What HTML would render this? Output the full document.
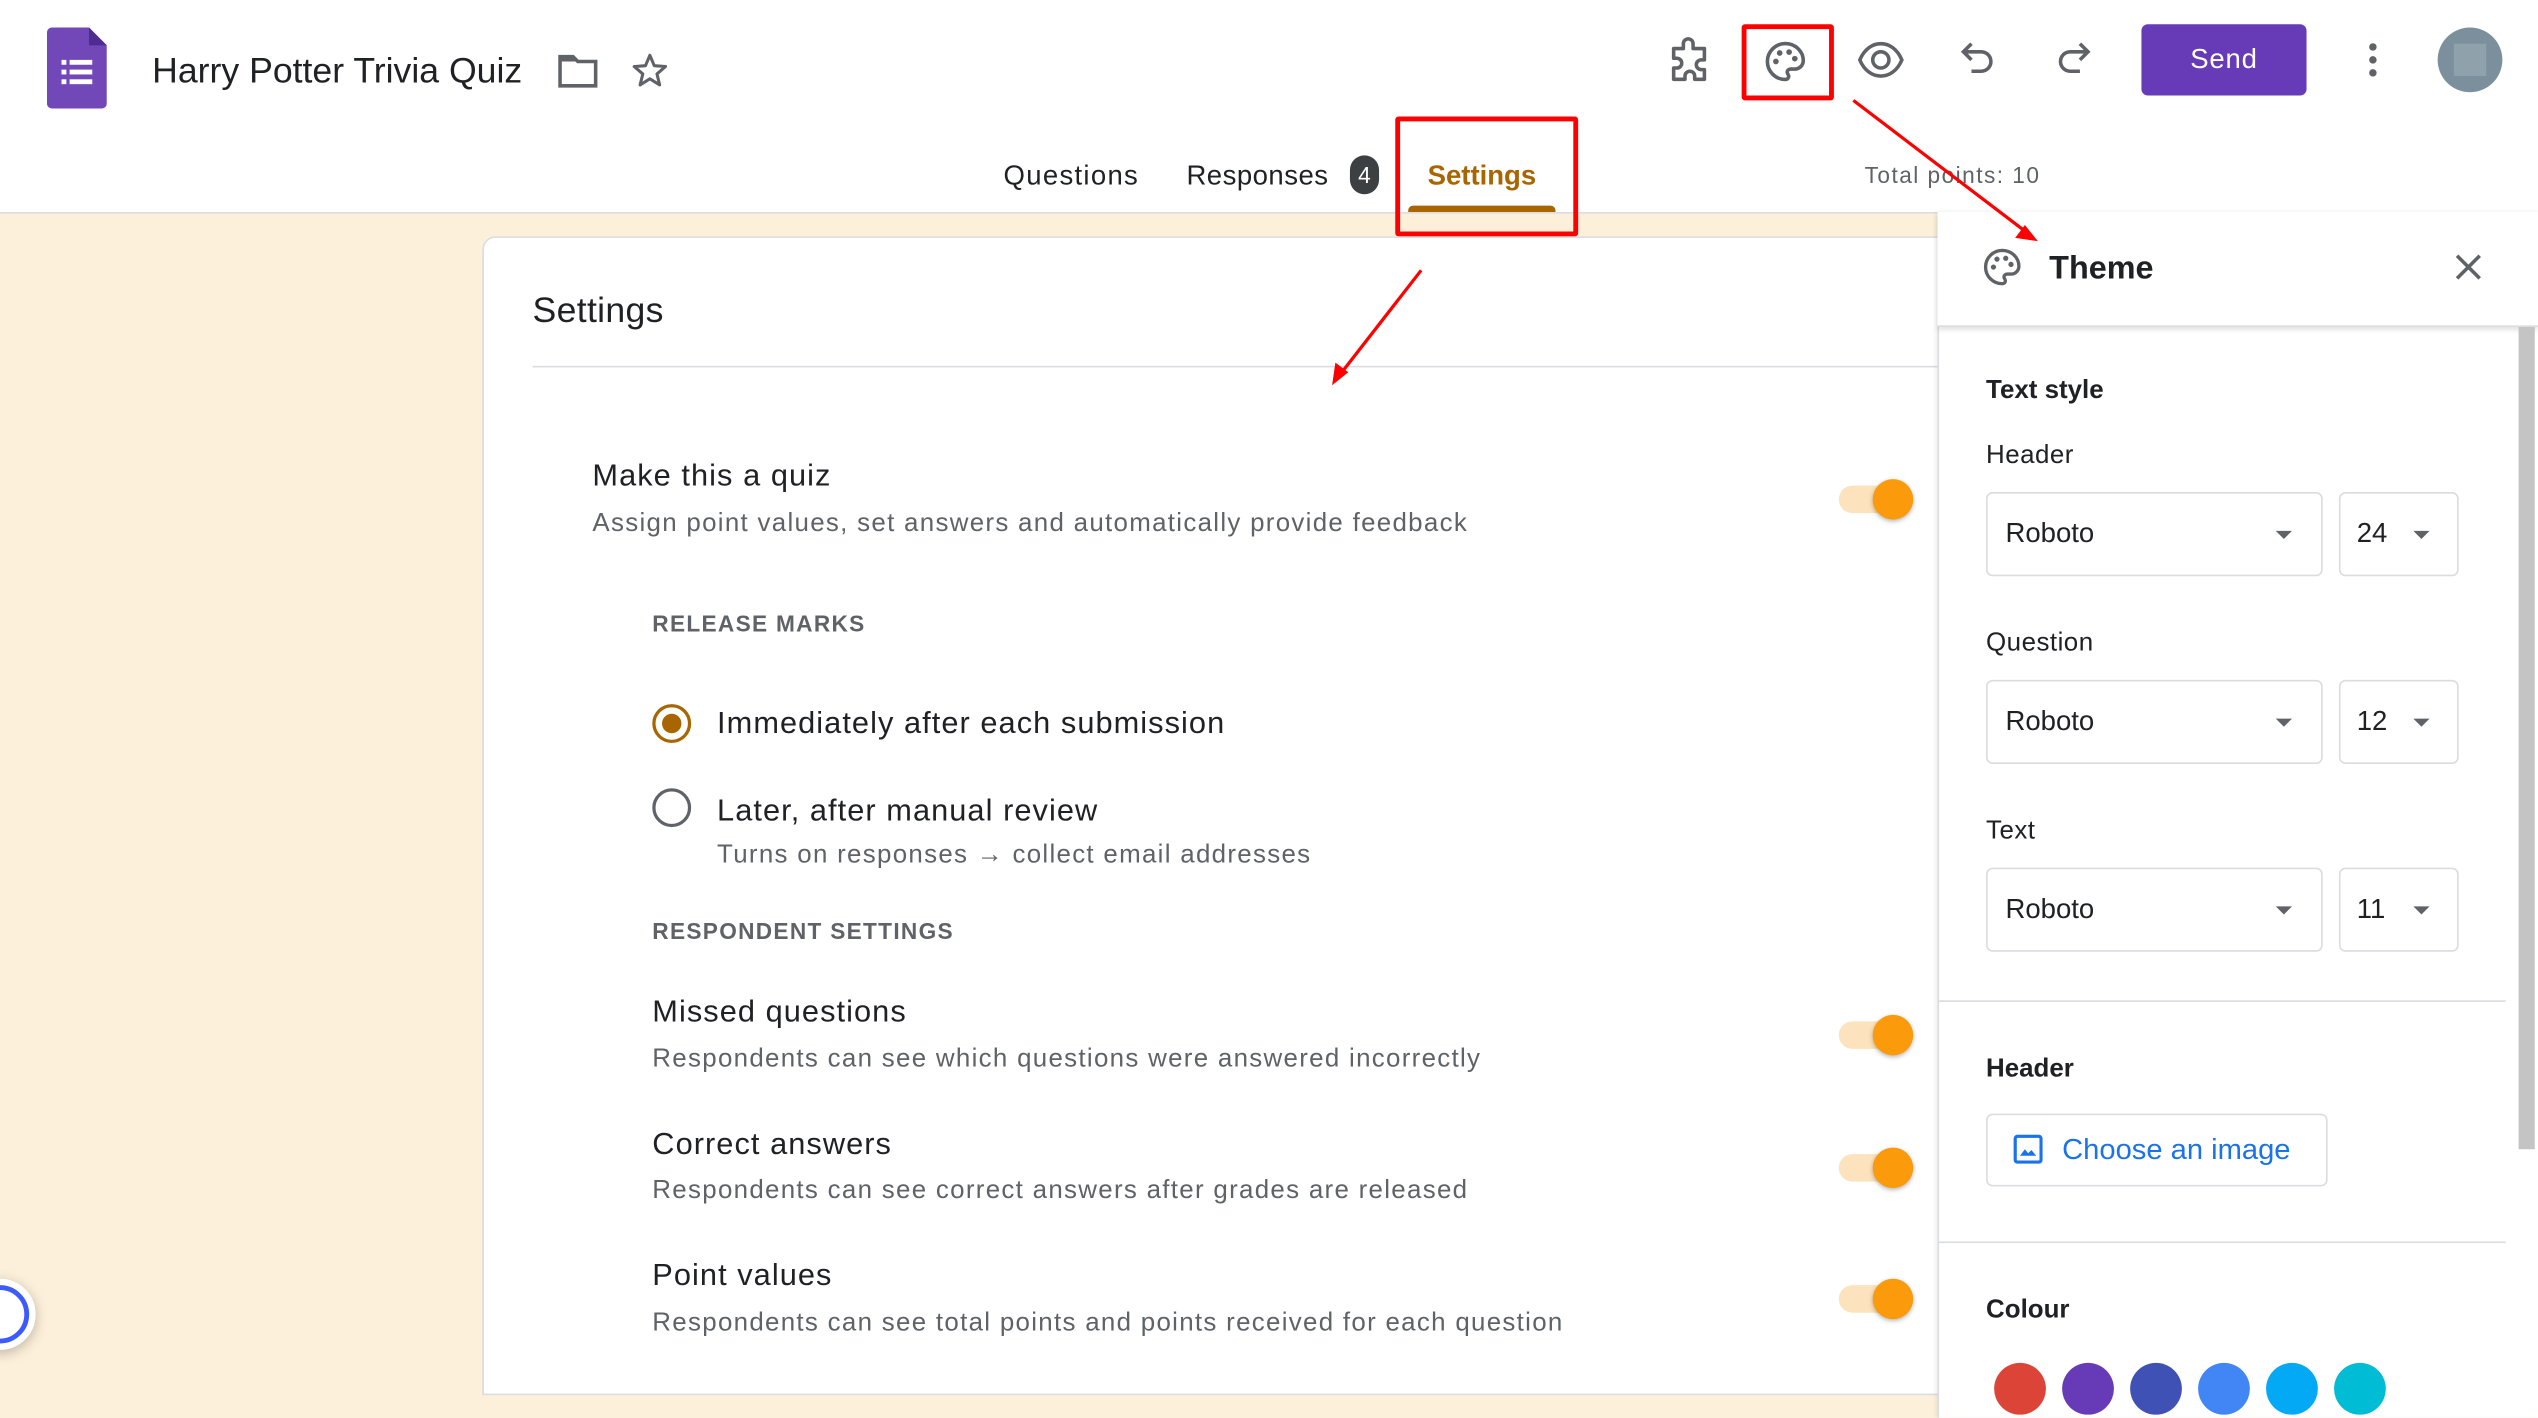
<!DOCTYPE html>
<html><head><meta charset="utf-8">
<style>
html,body{margin:0;padding:0;width:2538px;height:1418px;overflow:hidden;background:#fdf0da;}
#s{position:absolute;left:0;top:0;width:1568px;height:876px;transform:scale(1.61862);transform-origin:0 0;font-family:"Liberation Sans",Arial,sans-serif;color:#202124;background:#fdf0da;overflow:hidden}
.a{position:absolute;white-space:nowrap}
.t{position:absolute;white-space:nowrap;line-height:1}
.d{letter-spacing:0.8px}
.h{letter-spacing:0.65px}
.tog{position:absolute;width:34px;height:17px;border-radius:9px;background:#fde3bd}
.tog:after{content:"";position:absolute;right:-12px;top:-4px;width:25px;height:25px;border-radius:50%;background:#fb9a0a;box-shadow:0 1px 3px rgba(0,0,0,.3)}
.sel{position:absolute;border:1px solid #dadce0;border-radius:4px;background:#fff}
.sel span{position:absolute;top:50%;transform:translateY(-50%);font-size:17px;color:#202124}
.sel i{position:absolute;top:50%;margin-top:-2px;border-left:5px solid transparent;border-right:5px solid transparent;border-top:5px solid #5f6368}
.dot{position:absolute;width:32px;height:32px;border-radius:50%;top:842px}
</style></head><body><div id="s">
<div class="a" style="left:0;top:0;width:1568px;height:131px;background:#fff;border-bottom:1px solid #dadce0"></div>
<svg class="a" style="left:29px;top:17px" width="37" height="50" viewBox="0 0 37 50"><path d="M3 0H26L37 11V47a3 3 0 0 1-3 3H3a3 3 0 0 1-3-3V3a3 3 0 0 1 3-3z" fill="#7248b9"/><path d="M26 0V11H37z" fill="#4e2c91"/><g fill="#fff"><rect x="9" y="20" width="3" height="3"/><rect x="14" y="20" width="14" height="3"/><rect x="9" y="26" width="3" height="3"/><rect x="14" y="26" width="14" height="3"/><rect x="9" y="32" width="3" height="3"/><rect x="14" y="32" width="14" height="3"/></g></svg>
<div class="t" style="left:94px;top:33px;font-size:22px">Harry Potter Trivia Quiz</div>
<svg class="a" style="left:344px;top:32px" width="27" height="24" viewBox="0 0 27 24"><path d="M2 3h8l3 3h11v15H2z" fill="none" stroke="#5f6368" stroke-width="2.2"/><path d="M2 3h8l3 3H2z" fill="#5f6368"/></svg>
<svg class="a" style="left:389px;top:31px" width="25" height="25" viewBox="0 0 24 24"><path d="M12 3l2.6 6.2 6.7.5-5.1 4.4 1.6 6.5L12 17l-5.8 3.6 1.6-6.5L2.7 9.7l6.7-.5z" fill="none" stroke="#5f6368" stroke-width="1.8" stroke-linejoin="round"/></svg>
<svg class="a" style="left:1030px;top:22px" width="28" height="30" viewBox="0 0 28 30"><path d="M4 8h6V5a3 3 0 0 1 6 0v3h7v7h-2a3 3 0 0 0 0 6h2v6h-6v-2a3 3 0 0 0-6 0v2H4v-7h2a3 3 0 0 0 0-6H4z" fill="none" stroke="#5f6368" stroke-width="2.2" stroke-linejoin="round"/></svg>
<div class="a" style="left:1076px;top:15px;width:51px;height:41px;border:3px solid #ff0000;border-radius:2px"></div>
<svg class="a" style="left:1089px;top:24px" width="28" height="28" viewBox="0 0 24 24"><path d="M12 2.5a9.5 9.5 0 0 0 0 19c1.2 0 1.8-.8 1.8-1.6 0-1-.8-1.3-.8-2.2 0-1 .8-1.7 1.8-1.7h2.2a4.5 4.5 0 0 0 4.5-4.5c0-5-4.3-9-9.5-9z" fill="none" stroke="#5f6368" stroke-width="1.9"/><circle cx="7" cy="12" r="1.5" fill="#5f6368"/><circle cx="9" cy="7.5" r="1.5" fill="#5f6368"/><circle cx="14" cy="7" r="1.5" fill="#5f6368"/><circle cx="17" cy="10.5" r="1.5" fill="#5f6368"/></svg>
<svg class="a" style="left:1147px;top:24px" width="30" height="26" viewBox="0 0 30 26"><path d="M2 13C5 6 10 3 15 3s10 3 13 10c-3 7-8 10-13 10S5 20 2 13z" fill="none" stroke="#5f6368" stroke-width="2.2"/><circle cx="15" cy="13" r="5" fill="none" stroke="#5f6368" stroke-width="2.2"/></svg>
<svg class="a" style="left:1210px;top:24px" width="24" height="26" viewBox="0 0 24 26"><path d="M8 3L3 8l5 5" fill="none" stroke="#5f6368" stroke-width="2.2"/><path d="M3 8h11a6 6 0 0 1 0 12H8" fill="none" stroke="#5f6368" stroke-width="2.2"/></svg>
<svg class="a" style="left:1269px;top:24px" width="24" height="26" viewBox="0 0 24 26"><path d="M16 3l5 5-5 5" fill="none" stroke="#5f6368" stroke-width="2.2"/><path d="M21 8H10a6 6 0 0 0 0 12h6" fill="none" stroke="#5f6368" stroke-width="2.2"/></svg>
<div class="a" style="left:1323px;top:15px;width:102px;height:44px;background:#673ab7;border-radius:4px;color:#fff;font-size:17px;line-height:44px;text-align:center;letter-spacing:0.5px">Send</div>
<svg class="a" style="left:1462px;top:26px" width="8" height="22" viewBox="0 0 8 22"><circle cx="4" cy="3" r="2.3" fill="#5f6368"/><circle cx="4" cy="11" r="2.3" fill="#5f6368"/><circle cx="4" cy="19" r="2.3" fill="#5f6368"/></svg>
<div class="a" style="left:1506px;top:17px;width:40px;height:40px;border-radius:50%;background:#7b909c"><div style="margin:10px;width:20px;height:20px;background:#8fa1ab"></div></div>
<div class="t" style="left:620px;top:100px;font-size:17px;letter-spacing:0.8px">Questions</div>
<div class="t" style="left:733px;top:100px;font-size:17px;letter-spacing:0.3px">Responses</div>
<div class="a" style="left:834px;top:96px;width:18px;height:24px;border-radius:9px;background:#3c4043;color:#fff;font-size:14px;line-height:24px;text-align:center">4</div>
<div class="t" style="left:882px;top:100px;font-size:17px;color:#a86500;font-weight:bold">Settings</div>
<div class="a" style="left:870px;top:127px;width:91px;height:4px;background:#a86500;border-radius:3px 3px 0 0"></div>
<div class="a" style="left:862px;top:72px;width:107px;height:68px;border:3px solid #ff0000;border-radius:2px"></div>
<div class="t" style="left:1152px;top:101px;font-size:14px;color:#5f6368;letter-spacing:0.9px">Total points: 10</div>
<div class="a" style="left:298px;top:146px;width:920px;height:714px;background:#fff;border:1px solid #dadce0;border-radius:8px 8px 0 0"></div>
<div class="t" style="left:329px;top:181px;font-size:22px;letter-spacing:0.2px">Settings</div>
<div class="a" style="left:329px;top:226px;width:880px;height:1px;background:#dadce0"></div>
<div class="t h" style="left:366px;top:285px;font-size:19px">Make this a quiz</div>
<div class="t d" style="left:366px;top:316px;font-size:16px;color:#5f6368">Assign point values, set answers and automatically provide feedback</div>
<div class="tog" style="left:1136px;top:300px"></div>
<div class="t" style="left:403px;top:378px;font-size:14px;color:#5f6368;letter-spacing:0.8px;font-weight:bold">RELEASE MARKS</div>
<div class="a" style="left:403px;top:435px;width:20px;height:20px;border:2.5px solid #a86500;border-radius:50%"><div style="margin:4px;width:12px;height:12px;border-radius:50%;background:#a86500"></div></div>
<div class="t h" style="left:443px;top:438px;font-size:19px">Immediately after each submission</div>
<div class="a" style="left:403px;top:487px;width:20px;height:20px;border:2.5px solid #5f6368;border-radius:50%"></div>
<div class="t h" style="left:443px;top:492px;font-size:19px">Later, after manual review</div>
<div class="t d" style="left:443px;top:521px;font-size:16px;color:#5f6368">Turns on responses → collect email addresses</div>
<div class="t" style="left:403px;top:568px;font-size:14px;color:#5f6368;letter-spacing:0.8px;font-weight:bold">RESPONDENT SETTINGS</div>
<div class="t h" style="left:403px;top:616px;font-size:19px">Missed questions</div>
<div class="t d" style="left:403px;top:647px;font-size:16px;color:#5f6368">Respondents can see which questions were answered incorrectly</div>
<div class="tog" style="left:1136px;top:631px"></div>
<div class="t h" style="left:403px;top:698px;font-size:19px">Correct answers</div>
<div class="t d" style="left:403px;top:728px;font-size:16px;color:#5f6368">Respondents can see correct answers after grades are released</div>
<div class="tog" style="left:1136px;top:713px"></div>
<div class="t h" style="left:403px;top:779px;font-size:19px">Point values</div>
<div class="t d" style="left:403px;top:810px;font-size:16px;color:#5f6368">Respondents can see total points and points received for each question</div>
<div class="tog" style="left:1136px;top:794px"></div>
<div class="a" style="left:-22px;top:790px;width:36px;height:36px;border-radius:50%;background:#fff;border:4px solid #fff;box-shadow:0 2px 8px rgba(0,0,0,.25)"><div style="width:30px;height:30px;border:3px solid #3d5afe;border-radius:50%"></div></div>
<div class="a" style="left:1197px;top:131px;width:371px;height:745px;background:#fff;border-left:1px solid #dadce0;box-shadow:-1px 0 3px rgba(0,0,0,.08)"></div>
<div class="a" style="left:1197px;top:131px;width:371px;height:70px;border-bottom:1px solid #dadce0;box-shadow:0 2px 3px rgba(0,0,0,.12);background:#fff"></div>
<svg class="a" style="left:1224px;top:152px" width="26" height="26" viewBox="0 0 24 24"><path d="M12 2.5a9.5 9.5 0 0 0 0 19c1.2 0 1.8-.8 1.8-1.6 0-1-.8-1.3-.8-2.2 0-1 .8-1.7 1.8-1.7h2.2a4.5 4.5 0 0 0 4.5-4.5c0-5-4.3-9-9.5-9z" fill="none" stroke="#5f6368" stroke-width="1.9"/><circle cx="7" cy="12" r="1.5" fill="#5f6368"/><circle cx="9" cy="7.5" r="1.5" fill="#5f6368"/><circle cx="14" cy="7" r="1.5" fill="#5f6368"/><circle cx="17" cy="10.5" r="1.5" fill="#5f6368"/></svg>
<div class="t" style="left:1266px;top:156px;font-size:20px;font-weight:bold">Theme</div>
<svg class="a" style="left:1516px;top:156px" width="18" height="18" viewBox="0 0 18 18"><path d="M2 2l14 14M16 2L2 16" stroke="#5f6368" stroke-width="2.2"/></svg>
<div class="a" style="left:1556px;top:202px;width:10px;height:508px;background:#c4c4c4"></div>
<div class="t" style="left:1227px;top:234px;font-size:16px;font-weight:bold">Text style</div>
<div class="t" style="left:1227px;top:274px;font-size:16px;letter-spacing:0.3px">Header</div>
<div class="sel" style="left:1227px;top:304px;width:206px;height:50px"><span style="left:11px">Roboto</span><i style="left:178px"></i></div>
<div class="sel" style="left:1445px;top:304px;width:72px;height:50px"><span style="left:10px">24</span><i style="left:45px"></i></div>
<div class="t" style="left:1227px;top:390px;font-size:16px;letter-spacing:0.3px">Question</div>
<div class="sel" style="left:1227px;top:420px;width:206px;height:50px"><span style="left:11px">Roboto</span><i style="left:178px"></i></div>
<div class="sel" style="left:1445px;top:420px;width:72px;height:50px"><span style="left:10px">12</span><i style="left:45px"></i></div>
<div class="t" style="left:1227px;top:506px;font-size:16px;letter-spacing:0.3px">Text</div>
<div class="sel" style="left:1227px;top:536px;width:206px;height:50px"><span style="left:11px">Roboto</span><i style="left:178px"></i></div>
<div class="sel" style="left:1445px;top:536px;width:72px;height:50px"><span style="left:10px">11</span><i style="left:45px"></i></div>
<div class="a" style="left:1197px;top:618px;width:351px;height:1px;background:#dadce0"></div>
<div class="t" style="left:1227px;top:653px;font-size:16px;font-weight:bold">Header</div>
<div class="a" style="left:1227px;top:688px;width:209px;height:43px;border:1px solid #dadce0;border-radius:4px;background:#fff"></div>
<svg class="a" style="left:1244px;top:701px" width="18" height="18" viewBox="0 0 18 18"><rect x="1" y="1" width="16" height="16" rx="1.5" fill="none" stroke="#1a73e8" stroke-width="2"/><path d="M4 13l3-4 2 2.5 2-2 3 3.5z" fill="#1a73e8"/></svg>
<div class="t" style="left:1274px;top:701px;font-size:18px;color:#1a73e8">Choose an image</div>
<div class="a" style="left:1197px;top:767px;width:351px;height:1px;background:#dadce0"></div>
<div class="t" style="left:1227px;top:802px;font-size:16px;font-weight:bold">Colour</div>
<div class="dot" style="left:1232px;background:#db4437"></div>
<div class="dot" style="left:1274px;background:#673ab7"></div>
<div class="dot" style="left:1316px;background:#3f51b5"></div>
<div class="dot" style="left:1358px;background:#4285f4"></div>
<div class="dot" style="left:1400px;background:#03a9f4"></div>
<div class="dot" style="left:1442px;background:#00bcd4"></div>
<svg class="a" style="left:0;top:0" width="1568" height="876" viewBox="0 0 1568 876">
<line x1="878" y1="167" x2="829" y2="230" stroke="#ff0000" stroke-width="2"/>
<path d="M823 238l2-14 8 6z" fill="#ff0000"/>
<line x1="1145" y1="62" x2="1250" y2="142" stroke="#ff0000" stroke-width="2"/>
<path d="M1259 149l-14-2 6-8z" fill="#ff0000"/>
</svg>
</div></body></html>
